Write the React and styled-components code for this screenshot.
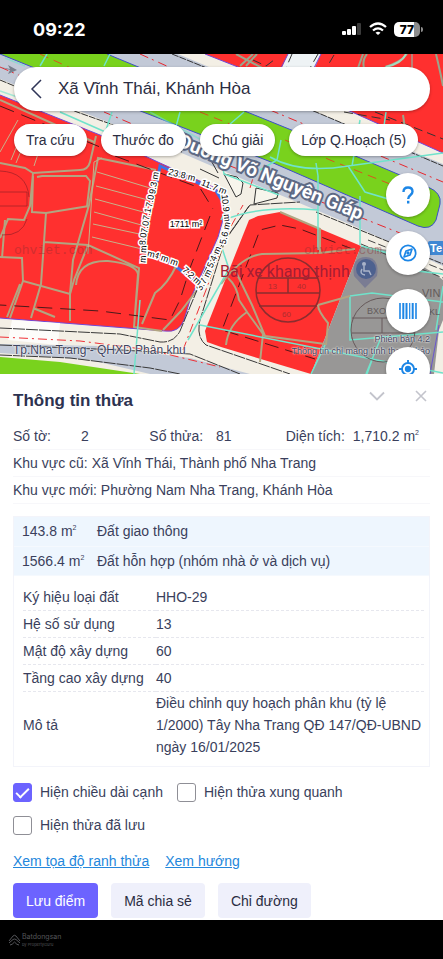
import styled, { createGlobalStyle } from "styled-components";

const tools = [
  { id: "help", label: "Trợ giúp" },
  { id: "compass", label: "La bàn" },
  { id: "layers", label: "Độ mờ" },
  { id: "locate", label: "Vị trí của tôi" },
];
const chips = ["Tra cứu", "Thước đo", "Chú giải", "Lớp Q.Hoạch (5)"];
const zones = [
  { area: "143.8", name: "Đất giao thông" },
  { area: "1566.4", name: "Đất hỗn hợp (nhóm nhà ở và dịch vụ)" },
];
const details = [
  ["Ký hiệu loại đất", "HHO-29"],
  ["Hệ số sử dụng", "13"],
  ["Mật độ xây dựng", "60"],
  ["Tầng cao xây dựng", "40"],
  [
    "Mô tả",
    "Điều chỉnh quy hoạch phân khu (tỷ lệ 1/2000) Tây Nha Trang QĐ 147/QĐ-UBND ngày 16/01/2025",
  ],
];
const options = [
  { id: "edges", label: "Hiện chiều dài cạnh", checked: true },
  { id: "around", label: "Hiện thửa xung quanh", checked: false },
  { id: "saved", label: "Hiện thửa đã lưu", checked: false },
];
// x, y, angle, text
const edgeLabels = [
  [182, 175, 14, "23.8 m"],
  [214, 187, 22, "11.7 m"],
  [226, 208, 84, "10.9 m"],
  [225, 233, -78, "5.6 m"],
  [214, 257, -66, "5.4 m"],
  [204, 280, -62, "3.7 m"],
  [192, 276, 42, "7.2 m"],
  [166, 259, 20, "4 m m"],
  [151, 254, 14, "m"],
  [154, 183, -80, "9.3 m"],
  [150, 201, -80, "7.0"],
  [147, 214, -80, "7.1"],
  [145, 227, -82, "7.0"],
  [143, 239, -84, "8.0"],
  [143, 254, -86, "m m"],
];

function PlanningMap() {
  return (
    <MapDrawing viewBox="0 54 443 320" preserveAspectRatio="xMidYMid slice">
      <rect x="-400" y="-200" width="1300" height="900" fill="#f3efe5" />

      {/* main road and green strip */}
      <path d="M0 54H178L316 112L443 164V266L354 226L221 170L133 132L77 110L0 79Z" fill="#c2c9d7" />
      <path d="M0 54H107L247 112L353 155L428 187Q442 193 440 204L436 220Q431 231 418 226L271 162L143 112Z" fill="#79d21d" />
      <path d="M0 54L143 112L271 162L418 226Q431 231 436 220L440 204Q442 193 428 187L353 155L247 112L107 54" fill="none" stroke="#3c4fc8" />
      <path d="M0 80L77 112L150 138L182 152M172 54L316 112L443 166M316 212L443 264" fill="none" stroke="#333" strokeDasharray="7 1" />
      <path d="M0 67L30 80M104 112L170 140M210 158L443 250M140 54L180 72M270 110L443 182" fill="none" stroke="#e8262d" strokeDasharray="9 4 2 5" />
      <path d="M40 54L110 86M200 112L240 128M285 140L330 160L430 200" fill="none" stroke="#d9541e" strokeDasharray="9 6" />
      <path d="M0 67l10 2-2-4 9 5-9 4 2-4z" fill="#777e8c" />

      {/* upper right block */}
      <path d="M205 54H443V153L352 112Z" fill="#ff302f" />
      <path d="M288 54H321L310 78H277Z" fill="#eef3f5" />
      <path d="M205 54L352 112L443 153M288 54L280 70M321 54L314 68" fill="none" stroke="#7146d8" />
      <path d="M292 54L286 68M318 54L310 68M253 60L266 66L274 60M334 55L327 67M375 112L443 139M344 112L390 120" fill="none" stroke="#333" strokeDasharray="9 5" />
      <path d="M240 66L253 54M246 66L257 54M236 54L262 68M363 54L358 68M367 54Q362 60 364 68M407 54Q401 62 385 67M436 54Q441 75 443 86M403 115L405 129" fill="none" stroke="#9ba58b" strokeWidth="2" />
      <path d="M386 67Q402 63 406 54" fill="none" stroke="#a5d9bd" strokeWidth="2" />

      {/* left block */}
      <path d="M0 95L100 135L160 163L213 187Q224 193 223 203L225 213L218 237L190 300L184 320Q179 333 165 331L0 318Z" fill="#ff302f" />
      <path d="M0 95L100 135L160 163L213 187Q224 193 223 203L225 213L218 237L190 300L184 320Q179 333 165 331L0 318" fill="none" stroke="#7146d8" />
      <path d="M157 182L160 166L216 191L223 202" fill="none" stroke="#3f73e6" strokeWidth="3" />
      <path d="M168 261L197 282" stroke="#3f73e6" strokeWidth="3" />
      <g fill="none" stroke="#b2a581" strokeWidth="2">
        <path d="M0 163L25 168L33 173L80 170Q88 170 90 162L96 136M0 100L94 142M33 173L30 206L24 220L8 219L0 238M33 176L32 212L46 213L89 206M0 257L22 258L23 281L70 294L73 260L89 205L98 158L156 170" />
        <path d="M37 177L42 176H86L90 181L87 206M46 213L44 242L41 284L31 318M44 242L88 245L139 268L134 327M23 281L10 318M20 284L7 317M70 294V321M88 245L74 280L70 294M76 285Q78 260 108 261Q136 264 138 274L134 327L162 331M177 264Q168 284 155 293L142 324M197 290L181 311L163 330M33 308L55 317M5 220L2 258" />
      </g>
      <g fill="none" stroke="#c9b089">
        <path d="M18 120L0 152M26 124L11 160M31 127L16 163M45 133L34 166M97 172L150 188M96 186L148 200M95 199L147 213M94 212L145 226M93 224L144 235M92 237L142 249M102 158L94 162L88 254" />
      </g>
      <path d="M0 106L100 147M115 156L200 188L213 209M210 216L190 268L180 300L170 320L100 311L0 305" fill="none" stroke="#4b1a1a" strokeDasharray="15 8" />
      <g fill="none" stroke="#9b2026" opacity="0.7">
        <path d="M0 171Q27 172 29 197M0 192H27V206H0M2 235Q22 236 27 219" />
      </g>
      <text x="14" y="254" className="mark watermark">ohviet.com</text>

      {/* lower road */}
      <path d="M12 320L60 323L58 345L8 340Z" fill="#fff" opacity="0.8" />
      <path d="M0 344L100 346L190 358L250 374H150L90 360L0 353Z" fill="#c2c9d7" />
      <path d="M0 357L60 362L140 374H0Z" fill="#79d21d" />
      <path d="M0 328L120 334L160 342Q174 343 180 331L207 266L250 205L300 202M0 355L70 358L150 368L180 374M249 206L225 240L200 320Q196 337 206 345L290 374M0 345L120 350L190 354L240 374" fill="none" stroke="#393939" strokeDasharray="12 1" />
      <path d="M0 337L80 341L150 350L220 367M183 350L206 290L226 235L243 205M250 188L256 168" fill="none" stroke="#ef2f35" strokeDasharray="9 4 2 4" />

      {/* traffic islands */}
      <path d="M224 174L237 177L243 183L241 194L236 197Z M256 188L278 193L277 198L254 204Z" fill="#f7f5ec" stroke="#333" />
      <path d="M208 155L218 173M200 169L219 178" stroke="#333" />

      {/* right block */}
      <path d="M249 220L258 216L280 212L361 246L311 374L221 347L207 342L205 331Z" fill="#ff302f" />
      <path d="M361 246L395 251L434 273L443 280V374H311Z" fill="#989796" />
      <path d="M434 374L439 330L443 320V374Z" fill="#f3efe5" />
      <path d="M439 325L430 374" stroke="#6a56d0" />
      <path d="M361 244L443 278M368 240L443 270" fill="none" stroke="#444" strokeDasharray="8 3" />
      <path d="M355 250L300 229L280 225L260 230L222 330L315 359" fill="none" stroke="#521619" strokeDasharray="14 7" />
      <g fill="none" stroke="#b2a581" strokeWidth="2">
        <path d="M221 284Q242 256 262 254L319 253L355 249M280 212L320 229V253M235 270L252 305L265 336L325 344M228 278Q237 286 239 300L247 312Q228 325 226 345M247 312L263 334L260 362M318 305L350 296M318 305Q318 311 328 323L326 345" />
      </g>
      <g fill="none" stroke="#70e3cb" strokeWidth="1.5">
        <path d="M350 296L372 293L443 302M361 246L388 253L400 269L443 274M350 297V340L443 332M372 360L367 374M325 345L311 374M380 340L366 374M443 286L436 330" />
        <path d="M318 250V176L316 163M224 220Q260 205 318 210M270 157Q300 174 348 166L443 153M348 166L365 192L412 206M360 120L352 166M221 220L228 205M40 66L47 54M104 66L110 54M112 112L104 136M180 112L174 134M244 112L229 125M220 150L224 174L279 195M360 196V245M134 374L140 300M200 325L443 373M222 248L229 269L188 340M260 170L277 160L281 140M60 112L110 134M386 112L382 140" />
        <path d="M5 58L25 66M0 91L26 100M150 112L220 150M412 54V68" opacity="0.6" />
      </g>
      <g fill="none" stroke="#8b2d2f" strokeWidth="1.5">
        <circle cx="288" cy="290" r="32" />
        <path d="M258 278H318M256 293H320M259 306H317M288 278V293" />
      </g>
      <g fill="none" stroke="#66595a">
        <circle cx="383" cy="330" r="32" />
        <path d="M352 318H414M352 333H414M382 318V333" />
      </g>
      <text x="268" y="289" className="mark" fontSize="8">13</text>
      <text x="297" y="289" className="mark" fontSize="8">40</text>
      <text x="282" y="317" className="mark" fontSize="8">60</text>
      <text x="367" y="314" className="mark dark" fontSize="9">BXO</text>
      <text x="304" y="254" className="mark watermark">ohviet.com</text>
      <text x="422" y="297" className="mark dark" fontSize="11">VIN</text>
      <text x="429" y="315" className="mark dark" fontSize="9">KL</text>
      <text x="220" y="277" className="place">Bãi xe khang thịnh</text>
      <path d="M365 288L354 276Q351 257 366 257Q380 258 377 276Z" fill="#7a7c93" />
      <circle cx="366" cy="269" r="10" fill="#4d618f" />
      <circle cx="364" cy="264" r="2" fill="#a9b3c9" />
      <path d="M364 266V271H369L371 275M362 269Q359 274 365 275" fill="none" stroke="#a9b3c9" strokeWidth="1.5" />
      <rect x="428" y="241" width="40" height="14" rx="2" fill="#3f87d3" />
      <text x="430" y="252" fontSize="11" fontWeight="700" fill="#fff">Te</text>

      <text transform="translate(360 220) rotate(22)" className="street">Đường Võ Nguyên Giáp</text>
      <text x="186" y="227" className="edge">1711 m²</text>
      {edgeLabels.map(([x, y, angle, text]) => (
        <text key={`${x}-${y}`} transform={`translate(${x} ${y}) rotate(${angle})`} dy="3" className="edge">
          {text}
        </text>
      ))}
    </MapDrawing>
  );
}

function ToolIcon({ id }) {
  if (id === "help") {
    return (
      <svg width="24" height="24" viewBox="0 0 24 24" fill="none" stroke="currentColor" strokeWidth="2.4">
        <path d="M7.500 9Q7.500 4.500 12 4.500Q16.500 4.500 16.500 8.500Q16.500 10.500 14.500 12Q12.200 13.600 12.200 16" />
        <path d="M12.200 17.800V20.500" />
      </svg>
    );
  }
  if (id === "compass") {
    return (
      <svg width="20" height="20" viewBox="0 0 20 20" fill="none" stroke="currentColor" strokeWidth="1.7">
        <circle cx="10" cy="10" r="7.7" />
        <path d="M14 6L12 12L6 14L8 8Z" strokeLinejoin="round" />
        <circle cx="10" cy="10" r="0.8" fill="currentColor" />
      </svg>
    );
  }
  if (id === "layers") {
    return (
      <svg width="20" height="20" viewBox="0 0 20 20" stroke="currentColor">
        <path d="M2 2V18M18 2V18" strokeWidth="1.6" />
        <path d="M5.3 2V18M8.500 2V18M14.7 2V18" strokeWidth="2" />
        <path d="M11.7 2V18" strokeWidth="1.2" />
      </svg>
    );
  }
  return (
    <svg width="20" height="20" viewBox="0 0 20 20" fill="none" stroke="currentColor" strokeWidth="1.9">
      <circle cx="10" cy="10" r="6" />
      <circle cx="10" cy="10" r="2.2" fill="currentColor" />
      <path d="M10 1V4M10 16V19M1 10H4M16 10H19" />
    </svg>
  );
}

function PhoneStatus() {
  return (
    <StatusBar>
      <Clock>09:22</Clock>
      <StatusIcons>
        <svg width="20" height="14" viewBox="0 0 20 14" fill="#fff">
          <rect x="0" y="9" width="4" height="4" rx="1" />
          <rect x="5" y="7" width="4" height="6" rx="1" />
          <rect x="10" y="4" width="4" height="9" rx="1" />
          <rect x="15" y="1" width="4" height="12" rx="1" fill="#3b3b3b" />
        </svg>
        <svg width="18" height="14" viewBox="0 0 18 14" fill="none" stroke="#fff" strokeWidth="2.3">
          <path d="M1 5Q9 -2 17 5" />
          <path d="M4 8.500Q9 4.200 14 8.500" />
          <path d="M9 13L6.500 10.700Q9 8.700 11.500 10.700Z" fill="#fff" stroke="none" />
        </svg>
        <Battery>77</Battery>
      </StatusIcons>
    </StatusBar>
  );
}

function ParcelPanel() {
  return (
    <Panel>
      <PanelHeader>
        <h2>Thông tin thửa</h2>
        <PanelActions>
          <IconButton aria-label="Thu gọn">
            <svg width="16" height="10" viewBox="0 0 16 10" fill="none" stroke="currentColor" strokeWidth="1.8">
              <path d="M1 1.500L8 8.500L15 1.500" />
            </svg>
          </IconButton>
          <IconButton aria-label="Đóng">
            <svg width="12" height="12" viewBox="0 0 12 12" fill="none" stroke="currentColor" strokeWidth="1.6">
              <path d="M1 1L11 11M11 1L1 11" />
            </svg>
          </IconButton>
        </PanelActions>
      </PanelHeader>
      <Facts>
        <Fact $gap={30}>
          <span>Số tờ:</span>
          <span>2</span>
        </Fact>
        <Fact $gap={13}>
          <span>Số thửa:</span>
          <span>81</span>
        </Fact>
        <Fact $gap={8}>
          <span>Diện tích:</span>
          <span>
            1,710.2 m<Sup>2</Sup>
          </span>
        </Fact>
      </Facts>
      <AreaLine>Khu vực cũ: Xã Vĩnh Thái, Thành phố Nha Trang</AreaLine>
      <AreaLine>Khu vực mới: Phường Nam Nha Trang, Khánh Hòa</AreaLine>
      <ZoneBox>
        <ZoneTable>
          <tbody>
            {zones.map((zone) => (
              <tr key={zone.area}>
                <td>
                  {zone.area} m<Sup>2</Sup>
                </td>
                <td>{zone.name}</td>
              </tr>
            ))}
          </tbody>
        </ZoneTable>
        <DetailTable>
          <tbody>
            {details.map(([name, value]) => (
              <tr key={name}>
                <th scope="row">{name}</th>
                <td>{value}</td>
              </tr>
            ))}
          </tbody>
        </DetailTable>
      </ZoneBox>
      <Options>
        {options.map((option) => (
          <Option key={option.id} htmlFor={option.id}>
            <Checkbox type="checkbox" id={option.id} defaultChecked={option.checked} />
            {option.label}
          </Option>
        ))}
      </Options>
      <Links>
        <a href="#toa-do">Xem tọa độ ranh thửa</a>
        <a href="#huong">Xem hướng</a>
      </Links>
      <Actions>
        <ActionButton $primary>Lưu điểm</ActionButton>
        <ActionButton>Mã chia sẻ</ActionButton>
        <ActionButton>Chỉ đường</ActionButton>
      </Actions>
    </Panel>
  );
}

function App() {
  return (
    <Page>
      <GlobalStyle />
      <PhoneStatus />
      <MapArea>
        <PlanningMap />
        <Credit>
          <PlanName>Tp.Nha Trang - QHXD Phân khu</PlanName>
          <Notice>
            Phiên bản 4.2
            <br />
            Thông tin chỉ mang tính tham khảo
          </Notice>
        </Credit>
        <Overlay>
          <SearchBar>
            <BackButton aria-label="Quay lại">
              <svg width="12" height="20" viewBox="0 0 12 20" fill="none" stroke="currentColor" strokeWidth="1.5">
                <path d="M11 1L2 10L11 19" />
              </svg>
            </BackButton>
            <input aria-label="Tìm kiếm" defaultValue="Xã Vĩnh Thái, Khánh Hòa" />
          </SearchBar>
          <Chips>
            {chips.map((chip) => (
              <Chip key={chip}>{chip}</Chip>
            ))}
          </Chips>
          <Tools>
            {tools.map((tool) => (
              <ToolButton key={tool.id} aria-label={tool.label}>
                <ToolIcon id={tool.id} />
              </ToolButton>
            ))}
          </Tools>
        </Overlay>
      </MapArea>
      <ParcelPanel />
      <Footer>
        <svg width="13" height="12" viewBox="0 0 13 12" fill="none" stroke="currentColor">
          <path d="M1 7L5 2Q6.500 0.500 8 2L12 7M1 9L5 5.500Q6.500 4.500 8 5.500L12 9M2 11Q4 11 6.500 8Q9 11 11 11" />
        </svg>
        <Brand>
          Batdongsan
          <small>by PropertyGuru</small>
        </Brand>
      </Footer>
    </Page>
  );
}

const GlobalStyle = createGlobalStyle`
  * {
    box-sizing: border-box;
  }
  body {
    margin: 0;
    background: #000;
  }
  body, button, input {
    font-family: "Liberation Sans", Arial, sans-serif;
    font-size: 14px;
  }
  button {
    border: 0;
    padding: 0;
    cursor: pointer;
  }
`;
const Page = styled.div`
  display: flex;
  flex-direction: column;
  min-height: 100vh;
  color: #3a3f5c;
`;
const StatusBar = styled.header`
  display: flex;
  align-items: center;
  justify-content: space-between;
  height: 54px;
  padding: 4px 23px 0 33px;
  color: #fff;
`;
const Clock = styled.span`
  font-family: Inter, sans-serif;
  font-size: 18px;
  font-weight: 700;
`;
const StatusIcons = styled.div`
  display: flex;
  align-items: center;
  gap: 7px;
`;
const Battery = styled.div`
  position: relative;
  width: 26px;
  height: 15px;
  border-radius: 5px;
  background: linear-gradient(90deg, #fff 77%, #8c8c8c 77%);
  color: #000;
  font-family: Inter, sans-serif;
  font-size: 12px;
  font-weight: 800;
  line-height: 15px;
  text-align: center;
  &::after {
    content: "";
    position: absolute;
    top: 5px;
    right: -3px;
    width: 2px;
    height: 5px;
    border-radius: 0 2px 2px 0;
    background: #8c8c8c;
  }
`;
const MapArea = styled.main`
  position: relative;
  flex: 1 0 0;
  min-height: 300px;
  overflow: hidden;
`;
const MapDrawing = styled.svg`
  position: absolute;
  inset: 0;
  width: 100%;
  height: 100%;
  .mark {
    fill: #8b2d2f;
    opacity: 0.7;
  }
  .dark {
    fill: #4d4242;
  }
  .watermark {
    font-family: "Liberation Mono", monospace;
    font-size: 13px;
    opacity: 0.4;
  }
  .place {
    font-family: Roboto, sans-serif;
    font-size: 16px;
    fill: #a51d35;
  }
  .street {
    font-family: Roboto, sans-serif;
    font-size: 19px;
    font-weight: 700;
    text-anchor: end;
    fill: #fff;
    stroke: #5d6984;
    stroke-width: 4px;
    paint-order: stroke;
  }
  .edge {
    font-family: "Liberation Sans", Arial, sans-serif;
    font-size: 9px;
    text-anchor: middle;
    fill: #000;
    stroke: #fff;
    stroke-width: 3px;
    paint-order: stroke;
  }
`;
const Credit = styled.div`
  position: absolute;
  inset: auto 13px 17px;
  display: flex;
  align-items: flex-end;
  justify-content: space-between;
  color: #3f4560;
  text-shadow: 0 0 2px #fff, 0 0 2px #fff;
  white-space: nowrap;
`;
const PlanName = styled.span`
  font-size: 12px;
  line-height: 14px;
`;
const Notice = styled.span`
  font-size: 9px;
  line-height: 12px;
  text-align: right;
`;
const Overlay = styled.div`
  position: absolute;
  inset: 0;
  display: flex;
  flex-direction: column;
  padding: 13px 13px 0 14px;
`;
const SearchBar = styled.div`
  display: flex;
  flex: none;
  align-items: center;
  height: 44px;
  padding: 0 16px;
  gap: 16px;
  border-radius: 22px;
  background: #fff;
  box-shadow: 0 1px 3px rgba(0, 0, 0, 0.3);
  input {
    flex: 1;
    min-width: 0;
    border: 0;
    padding: 0;
    outline: 0;
    background: none;
    font-size: 17px;
    color: #2b2d42;
  }
`;
const BackButton = styled.button`
  display: flex;
  background: none;
  color: #2f3557;
`;
const Chips = styled.nav`
  display: flex;
  flex: none;
  gap: 14px;
  margin-top: 13px;
`;
const Chip = styled.button`
  height: 32px;
  padding: 0 12px;
  border-radius: 16px;
  background: #fff;
  color: #2b2d42;
  white-space: nowrap;
  box-shadow: 0 1px 3px rgba(0, 0, 0, 0.3);
`;
const Tools = styled.div`
  display: flex;
  flex-direction: column;
  align-items: flex-end;
  gap: 14px;
  margin-top: 17px;
`;
const ToolButton = styled.button`
  display: flex;
  flex: none;
  align-items: center;
  justify-content: center;
  width: 44px;
  height: 44px;
  border-radius: 50%;
  background: #fff;
  color: #1c86e6;
  box-shadow: 0 1px 3px rgba(0, 0, 0, 0.3);
`;
const Panel = styled.section`
  padding: 14px 13px 2px;
  background: #fff;
`;
const PanelHeader = styled.div`
  display: flex;
  align-items: center;
  justify-content: space-between;
  margin-bottom: 10px;
  h2 {
    margin: 0;
    font-size: 17px;
    line-height: 26px;
    color: #2d3250;
  }
`;
const PanelActions = styled.div`
  display: flex;
  align-items: center;
  align-self: flex-start;
  gap: 30px;
  padding: 2px 3px;
`;
const IconButton = styled.button`
  display: flex;
  background: none;
  color: #c3c4cc;
`;
const Facts = styled.div`
  display: grid;
  grid-template-columns: repeat(3, minmax(0, 1fr));
  height: 26px;
  padding-right: 8px;
  border-bottom: 1px solid #f7f7fa;
  line-height: 24px;
`;
const Fact = styled.div`
  display: flex;
  gap: ${({ $gap }) => $gap}px;
  white-space: nowrap;
`;
const Sup = styled.sup`
  font-size: 7px;
  line-height: 0;
`;
const AreaLine = styled.p`
  margin: 0;
  padding: 1px 0;
  border-bottom: 1px solid #f7f7fa;
  line-height: 24px;
`;
const ZoneBox = styled.div`
  margin-top: 12px;
  border: 1px solid #f3f4fa;
`;
const ZoneTable = styled.table`
  width: 100%;
  border-collapse: collapse;
  background: #eef6fe;
  td {
    height: 29px;
    padding: 0 8px;
    border-bottom: 1px solid #f5f9fe;
    white-space: nowrap;
  }
  td:first-child {
    width: 83px;
  }
  td:last-child {
    padding: 0 8px 0 0;
    white-space: normal;
  }
`;
const DetailTable = styled.table`
  width: calc(100% - 14px);
  margin: 8px 5px 8px 9px;
  border-collapse: collapse;
  line-height: 22px;
  th,
  td {
    height: 27px;
    padding: 0;
    border-bottom: 1px dashed #e6e7ee;
    font-weight: 400;
    text-align: left;
  }
  th {
    width: 133px;
  }
  tr:last-child > * {
    border-bottom: 0;
  }
`;
const Options = styled.div`
  display: flex;
  flex-wrap: wrap;
  gap: 13px 14px;
  margin-top: 15px;
`;
const Option = styled.label`
  display: flex;
  align-items: center;
  gap: 8px;
  line-height: 20px;
`;
const Checkbox = styled.input`
  appearance: none;
  display: flex;
  align-items: center;
  justify-content: center;
  width: 19px;
  height: 19px;
  margin: 0;
  border: 1px solid #8f8f96;
  border-radius: 3px;
  background: #fff;
  &:checked {
    border-color: #6c63ff;
    background: #6c63ff;
  }
  &:checked::after {
    content: "";
    width: 11px;
    height: 5px;
    border: solid #fff;
    border-width: 0 0 2px 2px;
    transform: translateY(-1px) rotate(-45deg);
  }
`;
const Links = styled.div`
  display: flex;
  gap: 16px;
  margin-top: 16px;
  line-height: 20px;
  a {
    color: #2487dc;
  }
`;
const Actions = styled.div`
  display: flex;
  gap: 13px;
  margin-top: 12px;
`;
const ActionButton = styled.button`
  height: 35px;
  padding: 0 13px;
  border-radius: 4px;
  background: ${({ $primary }) => ($primary ? "#6c63ff" : "#eff0fb")};
  color: ${({ $primary }) => ($primary ? "#fff" : "#2b2d42")};
`;
const Footer = styled.footer`
  display: flex;
  align-items: center;
  gap: 1px;
  height: 39px;
  padding-left: 8px;
  color: #55565a;
`;
const Brand = styled.span`
  display: flex;
  flex-direction: column;
  gap: 1px;
  font-family: Inter, sans-serif;
  font-size: 7px;
  line-height: 9px;
  small {
    font-size: 4px;
    line-height: 5px;
  }
`;

export default App;
